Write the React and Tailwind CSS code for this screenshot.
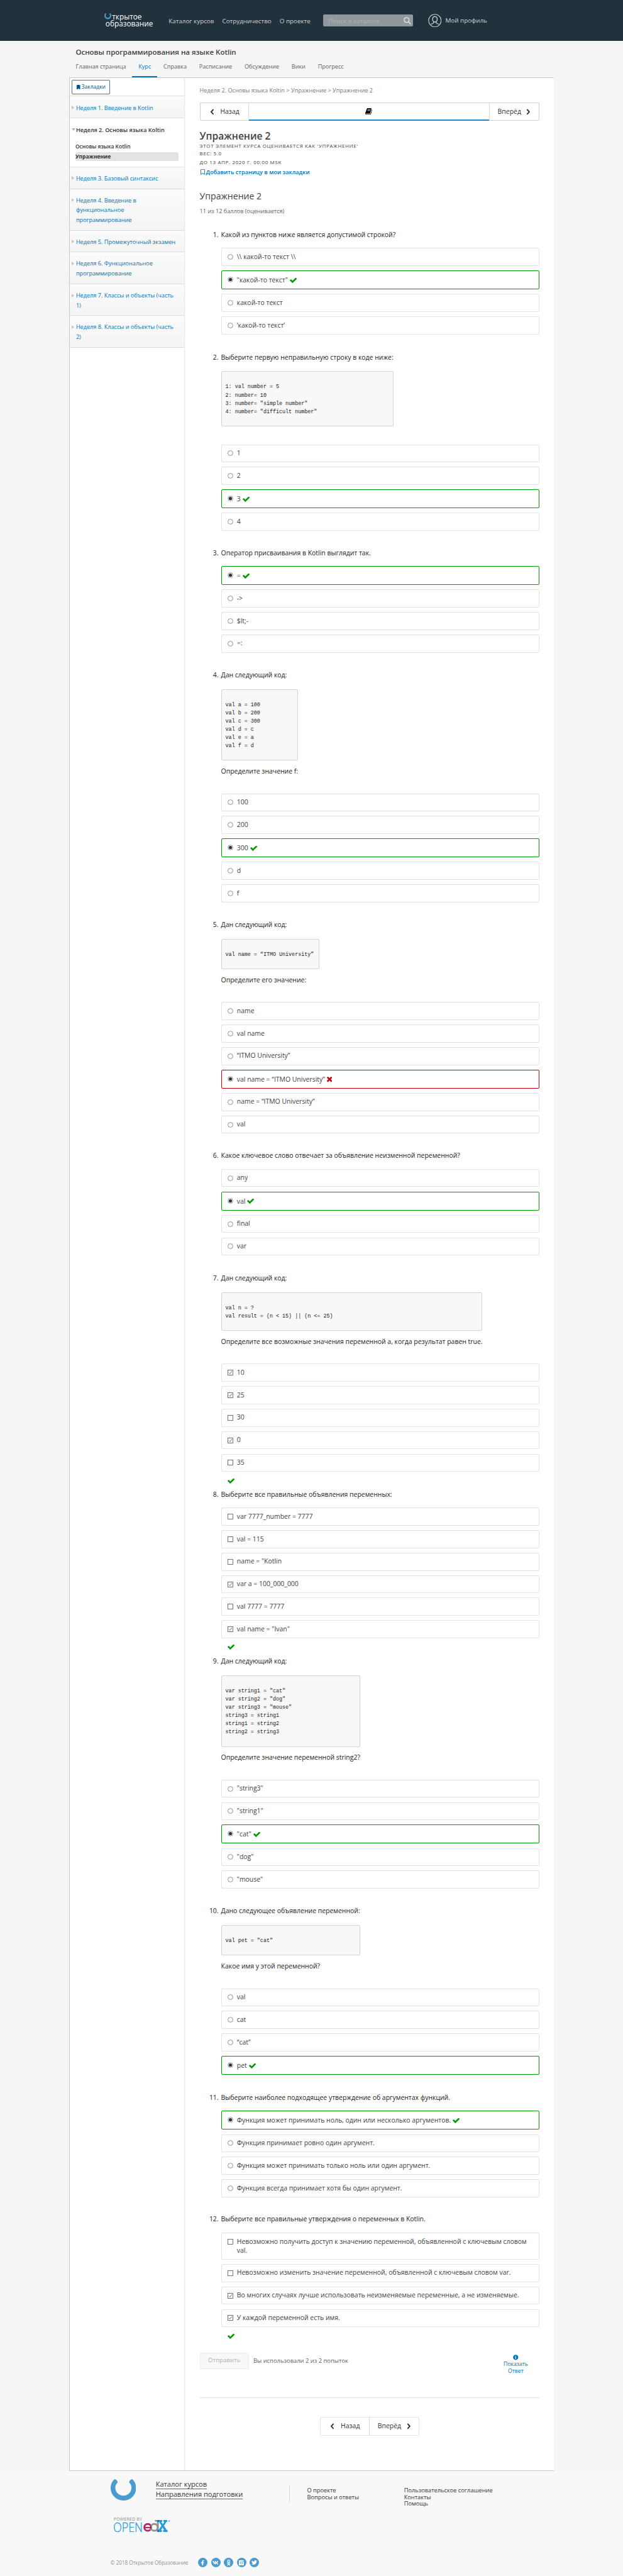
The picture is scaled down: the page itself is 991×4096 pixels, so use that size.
import { FaFacebookF, FaVk, FaOdnoklassniki, FaTwitter, FaInfoCircle, FaBookmark, FaRegBookmark } from "react-icons/fa";

const weeks = [
  { title: ["Неделя 3. Базовый синтаксис"], h: "h-[34.9px]" },
  { title: ["Неделя 4. Введение в", "функциональное", "программирование"], h: "h-[66.3px]" },
  { title: ["Неделя 5. Промежуточный экзамен"], h: "h-[34.5px]" },
  { title: ["Неделя 6. Функциональное", "программирование"], h: "h-[50.8px]" },
  { title: ["Неделя 7. Классы и объекты (часть", "1)"], h: "h-[50.2px]" },
  { title: ["Неделя 8. Классы и объекты (часть", "2)"], h: "h-[50.2px]" },
];

const questions = [
  {
    n: 1, h: "h-[194.7px]", title: "Какой из пунктов ниже является допустимой строкой?",
    options: ["\\\\ какой-то текст \\\\", "\"какой-то текст\"", "какой-то текст", "‘какой-то текст’"], right: 1,
  },
  {
    n: 2, h: "h-[311.1px]", title: "Выберите первую неправильную строку в коде ниже:",
    code: ["1: val number = 5", "2: number= 10", "3: number= \"simple number\"", "4: number= \"difficult number\""],
    codeSize: "w-[274px] h-[87.6px]", options: ["1", "2", "3", "4"], right: 2,
  },
  {
    n: 3, h: "h-[194.1px]", title: "Оператор присваивания в Kotlin выглядит так.",
    options: ["=", "->", "$lt;-", "=:"], right: 0,
  },
  {
    n: 4, h: "h-[397.3px]", title: "Дан следующий код:",
    code: ["val a = 100", "val b = 200", "val c = 300", "val d = c", "val e = a", "val f = d"],
    codeSize: "w-[122px] h-[113.8px]", ask: "Определите значение f:", options: ["100", "200", "300", "d", "f"], right: 2,
  },
  {
    n: 5, h: "h-[367.2px]", title: "Дан следующий код:", code: ["val name = “ITMO University”"],
    codeSize: "w-[156px] h-[48.2px]", ask: "Определите его значение:",
    options: ["name", "val name", "“ITMO University”", "val name = “ITMO University”", "name = “ITMO University”", "val"], wrong: 3,
  },
  {
    n: 6, h: "h-[194.8px]", title: "Какое ключевое слово отвечает за объявление неизменной переменной?",
    options: ["any", "val", "final", "var"], right: 1,
  },
  {
    n: 7, h: "h-[343.8px]", title: "Дан следующий код:", code: ["val n = ?", "val result = (n < 15) || (n <= 25)"],
    codeSize: "w-[415.6px] h-[61.3px]", ask: "Определите все возможные значения переменной a, когда результат равен true.",
    options: ["10", "25", "30", "0", "35"], checked: [0, 1, 3],
  },
  {
    n: 8, h: "h-[265px]", title: "Выберите все правильные объявления переменных:",
    options: ["var 7777_number = 7777", "val = 115", "name = \"Kotlin", "var a = 100_000_000", "val 7777 = 7777", "val name = \"Ivan\""],
    checked: [3, 5],
  },
  {
    n: 9, h: "h-[397.5px]", title: "Дан следующий код:",
    code: ["var string1 = \"cat\"", "var string2 = \"dog\"", "var string3 = \"mouse\"", "string3 = string1", "string1 = string2", "string2 = string3"],
    codeSize: "w-[221px] h-[113.8px]", ask: "Определите значение переменной string2?",
    options: ["\"string3\"", "\"string1\"", "\"cat\"", "\"dog\"", "\"mouse\""], right: 2,
  },
  {
    n: 10, h: "h-[296.4px]", title: "Дано следующее объявление переменной:", code: ["val pet = \"cat\""],
    codeSize: "w-[221px] h-[48.2px]", ask: "Какое имя у этой переменной?",
    options: ["val", "cat", "“cat”", "pet"], right: 3,
  },
  {
    n: 11, h: "h-[193.6px]", title: "Выберите наиболее подходящее утверждение об аргументах функций.",
    options: ["Функция может принимать ноль, один или несколько аргументов.", "Функция принимает ровно один аргумент.", "Функция может принимать только ноль или один аргумент.", "Функция всегда принимает хотя бы один аргумент."],
    right: 0,
  },
  {
    n: 12, h: "h-[220.5px]", title: "Выберите все правильные утверждения о переменных в Kotlin.",
    options: ["Невозможно получить доступ к значению переменной, объявленной с ключевым словом val.", "Невозможно изменить значение переменной, объявленной с ключевым словом var.", "Во многих случаях лучше использовать неизменяемые переменные, а не изменяемые.", "У каждой переменной есть имя."],
    checked: [2, 3], tallFirst: true,
  },
];

function Check({ className = "" }) {
  return (
    <svg viewBox="121 388 1550 1190" className={"h-[8.4px] w-[11.2px] shrink-0 fill-[#009b00] " + className}>
      <path d="M1671 566q0 40-28 68l-724 724-136 136q-28 28-68 28t-68-28l-136-136-362-362q-28-28-28-68t28-68l136-136q28-28 68-28t68 28l294 295 656-657q28-28 68-28t68 28l136 136q28 28 28 68z" />
    </svg>
  );
}

function Cross() {
  return (
    <svg viewBox="302 366 1188 1188" className="h-[8.4px] w-[8.4px] shrink-0 fill-[#c80012]">
      <path d="M1490 1322q0 40-28 68l-136 136q-28 28-68 28t-68-28l-294-294-294 294q-28 28-68 28t-68-28l-136-136q-28-28-28-68t28-68l294-294-294-294q-28-28-28-68t28-68l136-136q28-28 68-28t68 28l294 294 294-294q28-28 68-28t68 28l136 136q28 28 28 68t-28 68l-294 294 294 294q28 28 28 68z" />
    </svg>
  );
}

function Book() {
  return (
    <svg viewBox="60 120 1680 1550" className="h-[10.2px] w-[11px] fill-black">
      <path d="M1703 478q40 57 18 129l-275 906q-19 64-76.500 107.500t-122.500 43.500h-923q-77 0-148.500-53.500t-99.500-131.500q-24-67-2-127 0-4 3-27t4-37q1-8-3-21.500t-3-19.500q2-11 8-21t16.500-23.500 16.500-23.500q23-38 45-91.500t30-91.500q3-10 .5-30t-.5-28q3-11 17-28t17-23q21-36 42-92t25-90q1-9-2.500-32t.5-28q4-13 22-30.500t22-22.500q19-26 42.500-84.500t27.500-96.500q1-8-3-25.500t-2-26.500q2-8 9-18t18-23 17-21q8-12 16.500-30.500t15-35 16-36 19.500-32 26.500-23.500 36-11.500 47.500 5.500l-1 3q38-9 51-9h761q74 0 114 56t18 130l-274 906q-36 119-71.500 153.500t-128.500 34.500h-869q-27 0-38 15-11 16-1 43 24 70 144 70h923q29 0 56-15.500t35-41.500l300-987q7-22 5-57 38 15 59 43zm-1064 2q-4 13 2 22.500t20 9.500h608q13 0 25.500-9.500t16.500-22.500l21-64q4-13-2-22.500t-20-9.500h-608q-13 0-25.500 9.500t-16.500 22.500zm-83 256q-4 13 2 22.500t20 9.500h608q13 0 25.500-9.500t16.500-22.500l21-64q4-13-2-22.500t-20-9.500h-608q-13 0-25.500 9.500t-16.500 22.500z" />
    </svg>
  );
}

function Chevron({ flip }) {
  return (
    <svg viewBox="0 0 7 10" className={"h-[9.6px] w-[6.8px] fill-none stroke-[#333] " + (flip ? "-scale-x-100" : "")}>
      <path d="M5.7 0.8 L2 5 L5.7 9.2" strokeWidth="2" />
    </svg>
  );
}

function Horseshoe({ className }) {
  return (
    <svg viewBox="0 0 41 34" className={"fill-[#4a9bcf] " + className} preserveAspectRatio="none">
      <path d="M6.500 0 C2.500 3.200 0 8.200 0 13.800 C0 25 9 34 20.500 34 C32 34 41 25 41 13.800 C41 8.200 38.500 3.200 34.500 0 C31.500 0.800 29.500 3 30 5.500 C32.300 7.700 33.500 10.500 33.500 13.500 C33.500 20.700 27.700 26.300 20.500 26.300 C13.300 26.300 7.500 20.700 7.500 13.500 C7.500 10.500 8.700 7.700 11 5.500 C11.500 3 9.500 0.800 6.500 0 Z" />
    </svg>
  );
}

function Mark({ box, on }) {
  if (box) {
    return (
      <svg viewBox="0 0 9 9" className="h-[9px] w-[9px] shrink-0 fill-white stroke-[#666]">
        <rect x="0.5" y="0.5" width="8" height="8" strokeWidth="0.9" />
        {on && <path d="M2.100 4.600 L3.700 6.300 L7 2.200" fill="none" strokeWidth="1" />}
      </svg>
    );
  }
  return (
    <svg viewBox="0 0 9 9" className="h-[9px] w-[9px] shrink-0">
      <circle cx="4.500" cy="4.500" r="3.900" fill="#fff" stroke="#777" strokeWidth="0.8" />
      {on && <circle cx="4.500" cy="4.500" r="2.600" fill="#333" />}
    </svg>
  );
}

function Option({ text, state, box, on, tall }) {
  const frame = state === "right"
    ? "h-[30.200px] border-[#009b00] border-[1.300px] pt-[1.800px]"
    : state === "wrong"
      ? "h-[30.200px] border-[#c80012] border-[1.300px] pt-[1.800px]"
      : tall ? "h-[43.100px] border-[#e2e2e2] pt-[0.800px]" : "h-[28.700px] border-[#e2e2e2]";
  return (
    <div className={"flex items-center rounded-[2px] border pl-[9px] " + frame}>
      <div className={"flex " + (tall ? "self-start pt-[8.700px]" : state ? "-mt-[3px]" : "")}><Mark box={box} on={on} /></div>
      <div className="ml-[6.200px] flex w-[467px] items-center gap-[3px] text-[10.440px] leading-[13.750px] text-[#414141]">
        <span>{text}</span>
        {state === "right" && <Check />}
        {state === "wrong" && <Cross />}
      </div>
    </div>
  );
}

function Question({ q }) {
  const box = Boolean(q.checked);
  return (
    <section className={q.h}>
      <div className="flex h-[16px] text-[10.440px] leading-[16px] text-[#222]">
        <div className="w-[34px] pr-[4px] text-right">{q.n}.</div>
        <h4>{q.title}</h4>
      </div>
      <div className="ml-[34px]">
        {q.code && (
          <div className={"mt-[14.800px] flex flex-col justify-center rounded-[2px] border border-[#d2d2d2] bg-[#f8f8f8] pt-[2.600px] pl-[6px] " + q.codeSize}>
            {q.code.map((line) => (
              <div key={line} className="h-[13.060px] whitespace-pre font-['Liberation_Mono',monospace] text-[8.400px] leading-[13.060px] text-[#222]">{line}</div>
            ))}
          </div>
        )}
        {q.ask && <p className="mt-[8.700px] h-[16px] whitespace-nowrap text-[10.440px] leading-[16px] text-[#222]">{q.ask}</p>}
        <div className={"flex flex-col gap-[7.100px] " + (q.ask ? "mt-[27.500px]" : q.code ? "mt-[28.500px]" : "mt-[13.400px]")}>
          {q.options.map((text, i) => (
            <Option
              key={text}
              text={text}
              box={box}
              on={box ? q.checked.includes(i) : q.right === i || q.wrong === i}
              state={q.right === i ? "right" : q.wrong === i ? "wrong" : null}
              tall={q.tallFirst && i === 0}
            />
          ))}
        </div>
        {box && <Check className="mt-[10.300px] ml-[10.300px]" />}
      </div>
    </section>
  );
}

function WeekTitle({ lines }) {
  return (
    <div className="flex pt-[10.100px]">
      <svg viewBox="0 0 4 6" className="mt-[4.500px] ml-[3px] h-[6px] w-[4px] fill-[#c4c4c4]"><path d="M0 0 L4 3 L0 6 Z" /></svg>
      <div className="ml-[2.500px] text-[9.140px] leading-[15.660px] text-[#0075b4]">
        {lines.map((l) => <div key={l}>{l}</div>)}
      </div>
    </div>
  );
}

function Social({ children }) {
  return <div className="flex h-[15px] w-[15px] items-center justify-center rounded-full bg-[#4a9bcf] text-white">{children}</div>;
}

export default function App() {
  return (
    <div className="h-[4096px] w-[991px] overflow-hidden bg-[#f5f5f5] font-['Open_Sans',sans-serif] text-[#414141]">
      <header className="flex h-[65.300px] items-start bg-[#21323c] text-[9.850px] leading-[16px] text-[#cfd3d5]">
        <div className="ml-[166.300px] h-[65px] w-[101.900px] pt-[20.500px] text-[11.800px] leading-[11.500px] text-white">
          <div className="flex">
            <Horseshoe className="mt-[0.800px] h-[9.400px] w-[11px]" />
            <span className="ml-[1px]">ткрытое</span>
          </div>
          <div className="ml-[1.500px]">образование</div>
        </div>
        <nav className="flex w-[246.100px] gap-[13px] pt-[25px] whitespace-nowrap">
          <span>Каталог курсов</span>
          <span>Сотрудничество</span>
          <span>О проекте</span>
        </nav>
        <div className="mt-[22.800px] flex h-[19.600px] w-[142.800px] items-center justify-between rounded-[2px] bg-[#90989d] pr-[3px] pl-[8px] text-[#a9b3b8]">
          <span>Поиск в каталоге</span>
          <svg viewBox="0 0 12 12" className="h-[12px] w-[12px] fill-none stroke-white">
            <circle cx="4.800" cy="4.800" r="4" strokeWidth="1" />
            <path d="M7.700 7.700 L11.400 11.400" strokeWidth="1.100" />
          </svg>
        </div>
        <svg viewBox="0 0 22 22" className="mt-[21.600px] ml-[23.600px] h-[21.500px] w-[21.500px] fill-none stroke-[#cfd3d5]">
          <circle cx="11" cy="11" r="10.200" strokeWidth="1.100" />
          <path d="M11 4.500 C13.600 4.500 14.800 6.200 14.800 8.800 C14.800 11 13.600 13.200 11 13.200 C8.400 13.200 7.200 11 7.200 8.800 C7.200 6.200 8.400 4.500 11 4.500 Z M9 13 V14.800 L4.500 17.200 M13 13 V14.800 L17.500 17.200" strokeWidth="1.300" />
        </svg>
        <span className="mt-[23.500px] ml-[6.300px]">Мой профиль</span>
      </header>

      <div className="h-[57.300px] pl-[120.400px]">
        <h2 className="pt-[8.500px] text-[11.500px] leading-[18px] font-semibold whitespace-nowrap">Основы программирования на языке Kotlin</h2>
        <nav className="mt-[4.200px] -ml-[9.800px] flex h-[26.600px] text-[9.100px] leading-[20px] whitespace-nowrap text-[#5e5e5e]">
          <span className="px-[9.900px]">Главная страница</span>
          <span className="border-b-[2.600px] border-[#0075b4] px-[9.900px] text-[#0075b4]">Курс</span>
          <span className="px-[9.900px]">Справка</span>
          <span className="px-[9.900px]">Расписание</span>
          <span className="px-[9.900px]">Обсуждение</span>
          <span className="px-[9.900px]">Вики</span>
          <span className="px-[9.900px]">Прогресс</span>
        </nav>
      </div>

      <div className="ml-[110.400px] flex h-[3806.300px] w-[770.400px] border border-r-0 border-[#c8c8c8] bg-white">
        <aside className="h-full w-[182.700px] shrink-0 border-r border-[#e7e7e7]">
          <div className="flex h-[29.900px] items-start border-b border-[#dcdcdc] pt-[3px] pl-[2.500px]">
            <div className="flex h-[23.500px] w-[60.800px] items-center justify-center gap-[1.500px] rounded-[2px] border border-[#3c7f9c] text-[8.500px] text-[#065683]">
              <FaBookmark className="h-[7.500px] w-[7.500px]" />
              <span>Закладки</span>
            </div>
          </div>
          <div className="h-[35px] border-b border-[#dcdcdc] bg-linear-to-b from-[#fbfbfb] to-[#f4f4f4]"><WeekTitle lines={["Неделя 1. Введение в Kotlin"]} /></div>
          <div className="h-[77.200px] border-b border-[#e4e4e4]">
            <div className="flex pt-[10.400px]">
              <svg viewBox="0 0 6 4" className="mt-[5.500px] ml-[2.500px] h-[4px] w-[6px] fill-[#b0b0b0]"><path d="M0 0 L6 0 L3 4 Z" /></svg>
              <div className="ml-[1px] text-[9.140px] leading-[15.660px] font-semibold text-[#333]">Неделя 2. Основы языка Koltin</div>
            </div>
            <div className="mt-[11.500px] pl-[8.500px] text-[8.480px] leading-[14px] font-semibold text-[#333]">Основы языка Kotlin</div>
            <div className="mt-[1.600px] ml-[8.500px] h-[14px] w-[164px] rounded-[3px] bg-[#e3e3e3] text-[8.480px] leading-[14px] font-bold text-[#333]">Упражнение</div>
          </div>
          {weeks.map((w) => (
            <div key={w.title.join(" ")} className={"border-b border-[#dcdcdc] bg-linear-to-b from-[#fbfbfb] to-[#f4f4f4] " + w.h}>
              <WeekTitle lines={w.title} />
            </div>
          ))}
        </aside>

        <main className="ml-[23.500px] w-[540.800px] shrink-0">
          <div className="h-[39.600px] pt-[12px] text-[9.140px] leading-[16px] text-[#777]">Неделя 2. Основы языка Koltin &gt; Упражнение &gt; Упражнение 2</div>
          <div className="flex h-[28.600px] rounded-[2px] border border-[#cfcfcf] text-[10.440px] text-[#333]">
            <div className="flex w-[77.400px] items-center border-r border-[#dadada] pl-[15px]"><Chevron /><span className="ml-[10px]">Назад</span></div>
            <div className="-mb-px flex flex-1 items-center justify-center border-b-[2.600px] border-[#1f8ac8]"><Book /></div>
            <div className="flex w-[79.800px] items-center border-l border-[#dadada] pl-[13px]"><span className="mr-[8.500px]">Вперёд</span><Chevron flip /></div>
          </div>
          <h3 className="mt-[14.500px] h-[21px] text-[15.600px] leading-[21px] font-semibold">Упражнение 2</h3>
          <div className="-mt-[0.900px] text-[7.970px] leading-[11.700px] tracking-[0.652px] whitespace-nowrap text-[#414141]">
            <div>ЭТОТ ЭЛЕМЕНТ КУРСА ОЦЕНИВАЕТСЯ КАК 'УПРАЖНЕНИЕ'</div>
            <div>ВЕС: 5.0</div>
            <div className="mt-[1.800px]">ДО 13 АПР. 2020 Г. 00:00 MSK</div>
          </div>
          <div className="mt-[2.400px] flex h-[16px] items-center gap-[1px] text-[9.140px] font-semibold text-[#0075b4]">
            <FaRegBookmark className="h-[9px] w-[9px]" />
            <span>Добавить страницу в мои закладки</span>
          </div>
          <h3 className="mt-[18.500px] h-[24px] text-[14.100px] leading-[24px]">Упражнение 2</h3>
          <p className="mt-[4.300px] h-[16px] text-[9.140px] leading-[16px] text-[#5e5e5e]">11 из 12 баллов (оценивается)</p>
          <div className="mt-[20.500px]">
            {questions.map((q) => <Question key={q.n} q={q} />)}
          </div>
          <div className="flex h-[72.300px] items-start border-b border-[#e0e0e0]">
            <div className="flex h-[25.700px] w-[78.400px] items-center justify-center rounded-[2px] border border-[#ececec] bg-[#f8f8f8] text-[9.700px] text-[#b1b1b1]">Отправить</div>
            <span className="ml-[7px] h-[25.700px] text-[9.380px] leading-[26px] text-[#5e5e5e]">Вы использовали 2 из 2 попыток</span>
            <div className="mt-[3.300px] mr-[18.500px] ml-auto flex flex-col items-center text-[8.660px] leading-[11.200px] text-[#0075b4]">
              <FaInfoCircle className="mb-[1px] h-[8.600px] w-[8.600px]" />
              <span>Показать</span>
              <span>Ответ</span>
            </div>
          </div>
          <div className="mt-[30px] ml-[191.700px] flex h-[29.500px] w-[157.300px] rounded-[3px] border border-[#e2e2e2] text-[10.440px] text-[#333]">
            <div className="flex w-[78px] items-center border-r border-[#d8d8d8] pl-[15px]"><Chevron /><span className="ml-[10px]">Назад</span></div>
            <div className="flex flex-1 items-center pl-[12.500px]"><span className="mr-[9px]">Вперёд</span><Chevron flip /></div>
          </div>
        </main>
      </div>

      <footer className="h-[170px] bg-[#f8f8f8] pl-[175.800px] text-[#333]">
        <div className="flex h-[72.200px] items-start whitespace-nowrap">
          <Horseshoe className="mt-[12.900px] h-[34px] w-[40.600px]" />
          <div className="mt-[12.900px] ml-[31.300px] w-[212.200px] text-[11.100px] leading-[16.500px]">
            <div><span className="border-b border-[#666]"><span className="inline-block h-[12.500px] leading-[14px]">Каталог курсов</span></span></div>
            <div><span className="border-b border-[#666]"><span className="inline-block h-[12.500px] leading-[14px]">Направления подготовки</span></span></div>
          </div>
          <div className="mt-[22.800px] h-[27px] w-px bg-[#d8d8d8]" />
          <div className="mt-[26.600px] ml-[27.600px] w-[154.200px] text-[9.260px] leading-[10.500px]">
            <div>О проекте</div>
            <div>Вопросы и ответы</div>
          </div>
          <div className="mt-[26.600px] text-[9.260px] leading-[10.500px]">
            <div>Пользовательское соглашение</div>
            <div>Контакты</div>
            <div>Помощь</div>
          </div>
        </div>
        <svg viewBox="0 0 92 25" className="ml-[4.200px] h-[25px] w-[92px]">
          <text x="0.800" y="6.800" fontSize="7" textLength="45" className="fill-[#8a8a8a]">POWERED BY</text>
          <text x="0" y="25" fontSize="20.500" fontWeight="300" textLength="47" lengthAdjust="spacingAndGlyphs" className="fill-[#1fa0dc] stroke-[#1fa0dc] stroke-[0.300px]">OPEN</text>
          <circle cx="55" cy="17.700" r="5.400" fill="none" stroke="#b72667" strokeWidth="3" />
          <path d="M50 18 H60" stroke="#b72667" strokeWidth="2.200" />
          <path d="M59 19.200 H63 V21.500 H59 Z" fill="#f8f8f8" />
          <circle cx="65.500" cy="17.700" r="5.400" fill="none" stroke="#8e9093" strokeWidth="3" />
          <path d="M66.500 6 H72.500 V25 H69.800 V8.500 H66.500 Z" fill="#8e9093" />
          <path d="M70.500 6 H78 V9 H76.500 L79 12.600 L81.500 9 H80 V6 H86 V9 H84.700 L80.800 15 L85.300 22 H86.500 V25 H79.500 V22 H81 L78.600 18 L76.200 22 H77.500 V25 H70.500 V22 H72 L76.800 15 L73 9 H70.500 Z" fill="#1fa0dc" />
          <path d="M70.500 22 H72.500 V25 H70.500 Z M70.500 6 H72.500 V9 H70.500 Z" fill="#0f5d96" />
          <path d="M60 15 Q61 17.700 60 20.500 L59 20 V15 Z" fill="#7a1a3c" />
          <circle cx="89" cy="7.500" r="1" fill="#1fa0dc" />
        </svg>
        <div className="mt-[41.200px] flex h-[15px] items-center gap-[5.500px]">
          <span className="mr-[10px] w-[123.800px] text-[8.100px] whitespace-nowrap text-[#919191]">© 2018 Открытое Образование</span>
          <Social><FaFacebookF className="h-[8.500px] w-[8.500px]" /></Social>
          <Social><FaVk className="h-[9.500px] w-[9.500px]" /></Social>
          <Social><FaOdnoklassniki className="h-[9.500px] w-[9.500px]" /></Social>
          <Social>
            <svg viewBox="0 0 9 9" className="h-[8.500px] w-[8.500px]">
              <rect x="0" y="0" width="9" height="9" rx="1" fill="#fff" />
              <path d="M1 3.200 H8" stroke="#4a9bcf" strokeWidth="0.600" />
              <circle cx="4.500" cy="4.600" r="1.900" fill="#fff" stroke="#4a9bcf" strokeWidth="0.900" />
              <rect x="6.500" y="0.900" width="1.500" height="1.300" fill="#4a9bcf" />
            </svg>
          </Social>
          <Social><FaTwitter className="h-[9px] w-[9px]" /></Social>
        </div>
      </footer>
    </div>
  );
}
